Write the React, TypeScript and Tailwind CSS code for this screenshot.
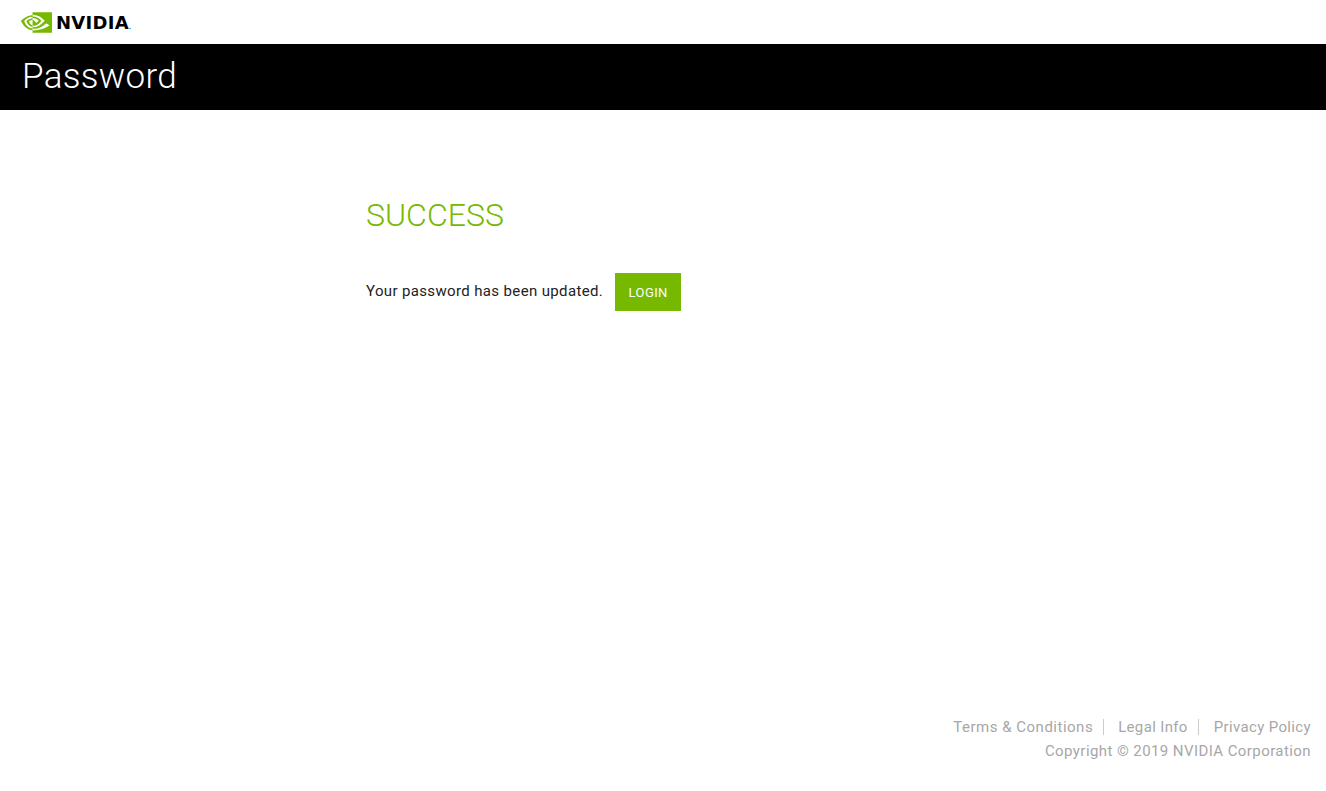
import { SiNvidia } from 'react-icons/si';

export default function App() {
  return (
    <div className="flex h-[791px] flex-col overflow-hidden bg-white font-['Roboto',sans-serif]">
      <header className="flex h-[44px] items-center pl-[21px]">
        <SiNvidia className="h-[31px] w-[31px] text-[#76b900]" />
        <span className="mt-[1px] ml-[4px] text-[18px] leading-none font-bold tracking-[0.3px] text-black font-['DejaVu_Sans',sans-serif]">
          NVIDIA<span className="text-[5px] align-baseline">.</span>
        </span>
      </header>

      <div className="flex h-[66px] items-center bg-black pl-[22px]">
        <h1 className="mb-[2px] text-[35px] leading-none font-light tracking-[0.3px] text-white">Password</h1>
      </div>

      <main className="flex-1 pt-[87px] pl-[366px]">
        <h2 className="text-[32px] leading-[36px] font-light tracking-[0.05px] text-[#76b900]">SUCCESS</h2>
        <div className="mt-[40px] flex items-center">
          <p className="mb-[2px] text-[15px] tracking-[0.36px] text-[#222]">Your password has been updated.</p>
          <button className="ml-[12px] h-[38px] w-[66px] bg-[#76b900] pt-[1px] text-[13px] tracking-[0.4px] text-white">LOGIN</button>
        </div>
      </main>

      <footer className="pr-[15px] pb-[28px] text-right text-[15px] leading-[24px] tracking-[0.42px] text-[#a7a7a7]">
        <div className="flex justify-end tracking-[0.35px]">
          <a className="my-[4px] mr-[14px] border-r border-[#ccc] pr-[10px] leading-[16px] tracking-[0.5px]">Terms &amp; Conditions</a>
          <a className="my-[4px] mr-[15px] border-r border-[#ccc] pr-[10px] leading-[16px]">Legal Info</a>
          <a className="my-[4px] leading-[16px]">Privacy Policy</a>
        </div>
        <div>Copyright © 2019 NVIDIA Corporation</div>
      </footer>
    </div>
  );
}
